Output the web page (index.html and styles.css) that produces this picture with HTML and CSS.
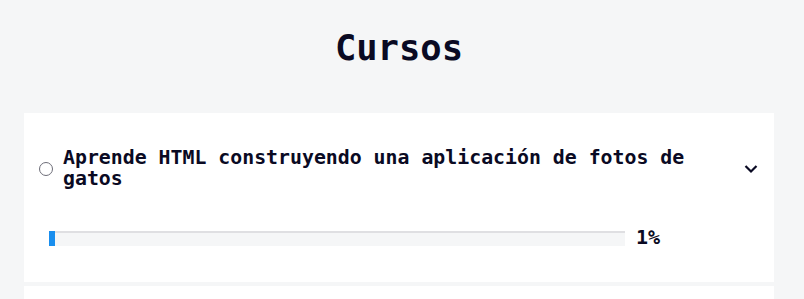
FILE: index.html
```html
<!DOCTYPE html>
<html lang="es">
<head>
  <meta charset="UTF-8" />
  <meta name="viewport" content="width=device-width, initial-scale=1.0"/>
  <title>Cursos</title>
  <link rel="stylesheet" href="styles.css">
</head>
<body>

  <div class="container">
    <h1 class="title">Cursos</h1>

    <div class="course-list">
      <div class="course">
        <div class="course-head">
          <span class="radio"></span>
          <h2 class="course-name">Aprende HTML construyendo una aplicación de fotos de gatos</h2>
          <svg class="chevron" width="14" height="10" viewBox="0 0 14 10">
            <path d="M1.5 2 L7 7.5 L12.5 2" fill="none" stroke="#0a0a23" stroke-width="2.2"/>
          </svg>
        </div>
        <div class="progress">
          <div class="progress-bar">
            <div class="progress-fill" style="width: 1%"></div>
          </div>
          <span class="progress-value">1%</span>
        </div>
      </div>
      <div class="course"></div>
    </div>
  </div>

</body>
</html>
```

FILE: styles.css
```css
* {
  box-sizing: border-box;
}

body {
  margin: 0;
  background: #f5f6f7;
  color: #0a0a23;
  font-family: "DejaVu Sans Mono", "Liberation Mono", monospace;
}

.container {
  margin-left: 24px;
  width: 750px;
}

.title {
  margin: 0;
  padding-top: 27px;
  height: 113px;
  text-align: center;
  font-size: 35.5px;
  line-height: 42px;
  font-weight: bold;
}

.course-list {
  display: flex;
  flex-direction: column;
  gap: 4px;
}

.course {
  background: #fff;
  height: 169px;
  padding: 34px 16px 0 15px;
}

.course-head {
  display: flex;
  align-items: center;
}

.radio {
  width: 14px;
  height: 14px;
  border: 1px solid #6d6d78;
  border-radius: 50%;
  flex-shrink: 0;
  margin-right: 10px;
  margin-top: 2px;
}

.course-name {
  margin: 0;
  flex: 1;
  font-size: 19.85px;
  line-height: 21px;
  font-weight: bold;
  padding-right: 40px;
}

.chevron {
  flex-shrink: 0;
  margin-top: 2px;
}

.progress {
  display: flex;
  align-items: center;
  margin-top: 40px;
  padding-left: 10px;
}

.progress-bar {
  width: 576px;
  height: 15px;
  background: #f5f6f7;
  box-shadow: inset 0 2px 0 #dfdfe2;
}

.progress-fill {
  height: 100%;
  min-width: 5px;
  background: #198eee;
}

.progress-value {
  margin-left: 11px;
  font-size: 20px;
  font-weight: bold;
  line-height: 16px;
  padding-bottom: 2px;
}
```
